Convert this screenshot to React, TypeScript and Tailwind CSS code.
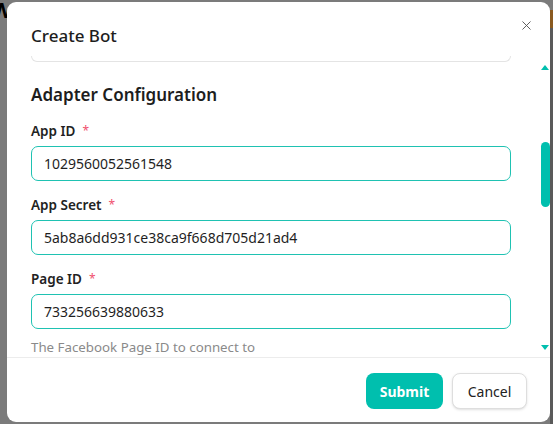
import { X } from 'lucide-react'

const FONT = { fontFamily: '"Noto Sans", "Open Sans", sans-serif' }

type Field = { label: string; value: string; gap: string }

const FIELDS: Field[] = [
  { label: 'App ID', value: '1029560052561548', gap: 'mt-[13px]' },
  { label: 'App Secret', value: '5ab8a6dd931ce38ca9f668d705d21ad4', gap: 'mt-[14px]' },
  { label: 'Page ID', value: '733256639880633', gap: 'mt-[14px]' },
]

function FieldRow({ label, value, gap }: Field) {
  return (
    <div className={gap}>
      <label className="flex h-[20px] items-center text-[13.5px] font-semibold text-[#222]">
        {label}
        <span className="ml-[7px] text-[12px] font-normal text-[#f0506e]">*</span>
      </label>
      <div className="mt-[5px] flex h-[35px] items-center rounded-[7px] border border-[#1fc2b2] px-[12px] text-[14px] text-[#1f1f1f]">
        {value}
      </div>
    </div>
  )
}

function ScrollRail() {
  return (
    <div className="flex w-[14px] flex-col items-center pt-[9px]">
      <div className="h-0 w-0 border-x-[4px] border-b-[5px] border-x-transparent border-b-[#00bfae]" />
      <div className="mt-[72px] h-[65px] w-[9px] rounded-full bg-[#00bfae]" />
      <div className="mt-[138px] h-0 w-0 border-x-[4px] border-t-[5px] border-x-transparent border-t-[#00bfae]" />
    </div>
  )
}

export default function App() {
  return (
    <div className="flex h-[424px] w-[553px] overflow-hidden bg-[#7b7b7b] pt-[2px]" style={FONT}>
      <div className="w-[7px] overflow-hidden">
        <span className="-ml-[9px] -mt-[4px] block text-[22px] font-bold leading-none text-black">W</span>
      </div>

      <div className="flex h-[420px] w-[543px] flex-col overflow-hidden rounded-[9px] bg-white">
        <header className="flex h-[54px] items-start justify-between pl-[24px] pr-[16px]">
          <h1 className="mt-[22px] text-[17px] font-medium leading-[24px] text-[#1d1d1d]">Create Bot</h1>
          <button type="button" className="mt-[16px] text-[#555]">
            <X size={15} strokeWidth={1.5} />
          </button>
        </header>

        <div className="flex h-[301px] overflow-hidden">
          <div className="w-[504px] pl-[24px]">
            <div className="h-[6px] w-[480px] rounded-b-[12px] border-x border-b border-[#e4e4e4]" />
            <h2 className="mt-[20px] h-[26px] text-[17px] font-semibold leading-[26px] text-[#1d1d1d]">
              Adapter Configuration
            </h2>
            <div className="w-[480px]">
              {FIELDS.map((f) => (
                <FieldRow key={f.label} {...f} />
              ))}
            </div>
            <p className="mt-[8px] text-[13.3px] leading-[20px] text-[#8a8a8a]">The Facebook Page ID to connect to</p>
          </div>
          <div className="ml-[27px]">
            <ScrollRail />
          </div>
        </div>

        <footer className="flex flex-1 items-start justify-end gap-[9px] border-t border-[#ececec] pr-[23px] pt-[15px]">
          <button
            type="button"
            className="h-[36px] w-[77px] rounded-[8px] bg-[#00bfae] text-[14px] font-bold text-white"
          >
            Submit
          </button>
          <button
            type="button"
            className="h-[36px] w-[75px] rounded-[8px] border border-[#dedede] bg-white text-[14px] text-[#222] shadow-sm"
          >
            Cancel
          </button>
        </footer>
      </div>

      <div className="flex w-[3px] flex-col">
        <div className="mt-[8px] h-[18px] bg-[#8a5a20]" />
        <div className="flex-1 bg-[#5a5a5a]" />
      </div>
    </div>
  )
}
